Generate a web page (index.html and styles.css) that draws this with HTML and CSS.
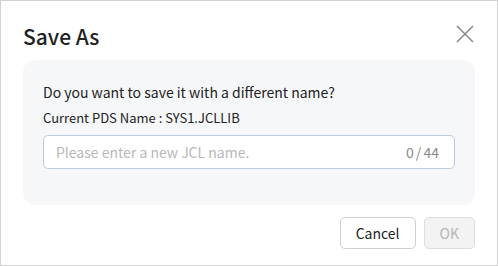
FILE: index.html
```html
<!DOCTYPE html>
<html lang="en">

<head>
    <meta charset="UTF-8">
    <meta name="viewport" content="width=device-width, initial-scale=1.0">
    <title>Save As</title>
    <link rel="stylesheet" href="styles.css">
</head>

<body>
    <div class="dialog">
        <div class="dialog_header">
            <h2 class="dialog_title">Save As</h2>
            <a href="javascript:;" class="close_btn">
                <svg width="18" height="18" viewBox="0 0 18 18">
                    <path d="M1 1 L17 17 M17 1 L1 17" stroke="#8a8a8a" stroke-width="1.6" fill="none"/>
                </svg>
            </a>
        </div>

        <div class="dialog_body">
            <p class="question">Do you want to save it with a different name?</p>
            <p class="current_name">Current PDS Name : SYS1.JCLLIB</p>
            <div class="name_input">
                <input type="text" placeholder="Please enter a new JCL name.">
                <span class="counter">0 / 44</span>
            </div>
        </div>

        <div class="dialog_footer">
            <button class="btn">Cancel</button>
            <button class="btn btn_disabled" disabled>OK</button>
        </div>
    </div>
</body>

</html>
```

FILE: styles.css
```css
* {
    margin: 0px;
    padding: 0px;
    box-sizing: border-box;
}

body {
    font-family: "Noto Sans CJK KR", "Noto Sans", sans-serif;
    color: #222;
    background-color: #fff;
}

a {
    text-decoration: none;
}

.dialog {
    width: 498px;
    height: 266px;
    border: 1px solid #d2d2d2;
    padding: 0px 22px;
    background-color: #fff;
}

/* ------------------------- header ------------------------- */
.dialog_header {
    display: flex;
    justify-content: space-between;
    align-items: center;
    height: 59px;
    padding-top: 10px;
}

.dialog_title {
    font-size: 21px;
    font-weight: 500;
    color: #222;
}

.close_btn {
    display: flex;
    margin-right: 1px;
    margin-top: -4px;
}

/* ------------------------- body ------------------------- */
.dialog_body {
    background-color: #f6f7f9;
    border-radius: 12px;
    padding: 20px 20px 35px;
    height: 145px;
}

.question {
    font-size: 14px;
    line-height: 24px;
    color: #222;
}

.current_name {
    font-size: 13px;
    line-height: 20px;
    margin-top: 4px;
    color: #222;
}

.name_input {
    display: flex;
    align-items: center;
    margin-top: 7px;
    height: 34px;
    border: 1px solid #bccadf;
    border-radius: 5px;
    background-color: #fff;
    padding: 0px 15px 0px 12px;
}

.name_input input {
    flex: 1;
    border: none;
    outline: none;
    font-family: inherit;
    font-size: 14px;
    color: #222;
    background: transparent;
}

.name_input input::placeholder {
    color: #b8b8b8;
}

.counter {
    font-size: 14px;
    color: #8a8a8a;
    word-spacing: -1px;
}

/* ------------------------- footer ------------------------- */
.dialog_footer {
    display: flex;
    justify-content: flex-end;
    gap: 8px;
    margin-top: 12px;
}

.btn {
    height: 32px;
    padding: 0px 15px;
    font-family: inherit;
    font-size: 14px;
    color: #222;
    background-color: #fff;
    border: 1px solid #cfcfcf;
    border-radius: 5px;
    cursor: pointer;
}

.btn_disabled {
    color: #b5b5b5;
    background-color: #f3f3f3;
    border-color: #dedede;
    cursor: default;
}
```
